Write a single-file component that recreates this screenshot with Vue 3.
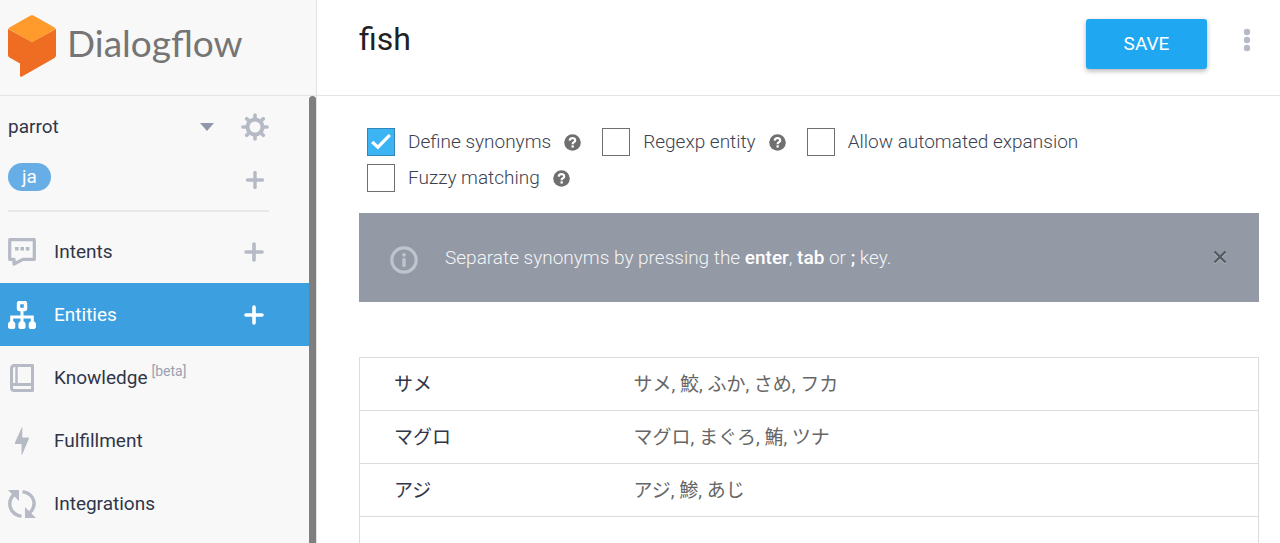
<script setup>
import { ref } from 'vue'

const name = ref('fish')
const showHint = ref(true)

const items = [
  { id: 'intents', label: 'Intents', add: true },
  { id: 'entities', label: 'Entities', add: true, active: true },
  { id: 'knowledge', label: 'Knowledge', note: '[beta]' },
  { id: 'fulfillment', label: 'Fulfillment' },
  { id: 'integrations', label: 'Integrations' },
]

const options = ref([
  { id: 'synonyms', label: 'Define synonyms', on: true, help: true },
  { id: 'regexp', label: 'Regexp entity', on: false, help: true },
  { id: 'expansion', label: 'Allow automated expansion', on: false, help: false },
  { id: 'fuzzy', label: 'Fuzzy matching', on: false, help: true },
])

const rows = [
  { value: 'サメ', synonyms: 'サメ, 鮫, ふか, さめ, フカ' },
  { value: 'マグロ', synonyms: 'マグロ, まぐろ, 鮪, ツナ' },
  { value: 'アジ', synonyms: 'アジ, 鯵, あじ' },
  { value: '', synonyms: '' },
]
</script>

<template>
  <div class="app">
    <aside class="sidebar">
      <a href="#" class="brand">
        <svg class="logo" viewBox="0 0 50 62" width="50" height="62" aria-hidden="true">
          <path fill="#ef6c23" d="M1 14 L25 27 L49 14 V40 Q49 42 47.500 43 L15 61.500 Q13 62.500 13 60.500 V48.500 L2.500 42.500 Q1 41.500 1 40 Z" />
          <path fill="#ff9a2d" d="M1.200 14 Q1.500 13 2.500 12.500 L23.500 .600 Q25 0 26.500 .600 L47.500 12.500 Q48.500 13 48.800 14 L25 27.500 Z" />
        </svg>
        <span class="wordmark">Dialogflow</span>
      </a>
      <div class="side-body">
        <div class="side-content">
          <div class="agent">
            <button type="button" class="agent-name">
              <span>parrot</span>
              <svg width="14" height="8" viewBox="0 0 14 8" aria-hidden="true"><path fill="#9097a8" d="M0 0H14L7 8Z" /></svg>
            </button>
            <button type="button" class="icon-btn" aria-label="Agent settings">
              <svg width="28" height="28" viewBox="0 0 28 28" fill="none" stroke="#b5bac5" aria-hidden="true">
                <circle cx="14" cy="14" r="7.500" stroke-width="4" />
                <path stroke-width="3.600" stroke-linecap="round" d="M14 5V2M14 23V26M5 14H2M23 14H26M7.500 7.500L5.700 5.700M20.500 20.500L22.300 22.300M7.500 20.500L5.700 22.300M20.500 7.500L22.300 5.700" />
              </svg>
            </button>
          </div>
          <div class="lang">
            <a href="#" class="pill">ja</a>
            <button type="button" class="icon-btn" aria-label="Add language">
              <svg width="28" height="18" viewBox="0 0 28 18" aria-hidden="true"><path d="M14 1.500V16.500M6.500 9H21.500" stroke="#b5bac5" stroke-width="3.400" stroke-linecap="round" /></svg>
            </button>
          </div>
          <nav class="nav">
            <div v-for="item in items" :key="item.id" class="nav-item" :class="{ active: item.active }">
              <a href="#" class="nav-link">
                <svg class="nav-icon" width="28" height="28" viewBox="0 0 28 28" aria-hidden="true">
                  <g v-if="item.id === 'intents'">
                    <path d="M1.700 1.700H26.300V21.300H15L6 26V21.300H1.700Z" fill="none" stroke="currentColor" stroke-width="3.200" stroke-linejoin="round" />
                    <path d="M7 9h3.600v3.600H7zM12.400 9H16v3.600h-3.600zM17.800 9h3.600v3.600h-3.600z" fill="currentColor" />
                  </g>
                  <g v-else-if="item.id === 'entities'">
                    <rect x="10.500" y="1.500" width="7" height="7" rx="1" fill="none" stroke="currentColor" stroke-width="3.400" />
                    <path d="M14 10V21M3.700 22V16H24.300V22" fill="none" stroke="currentColor" stroke-width="3" />
                    <path d="M1.500 20.500H6L7.300 22.500V26.500L6 28H1.500L0 26.500V22.500ZM11.800 20.500H16.200L17.600 22.500V26.500L16.200 28H11.800L10.400 26.500V22.500ZM22 20.500H26.500L28 22.500V26.500L26.500 28H22L20.700 26.500V22.500Z" fill="currentColor" />
                  </g>
                  <g v-else-if="item.id === 'knowledge'" fill="none" stroke="currentColor" stroke-width="3">
                    <path d="M24.500 19V1.500H6.500Q3.500 1.500 3.500 4.500V23.500Q3.500 26.500 6.500 26.500H24.500V20" stroke-linejoin="round" />
                    <path d="M4 20.500H26" />
                    <path d="M8.500 2V20" stroke-width="2.400" />
                  </g>
                  <path v-else-if="item.id === 'fulfillment'" fill="currentColor" d="M14 0L7 15.500V17H13.500V28H14L21 11.500V10.500H14.300V0Z" />
                  <g v-else>
                    <path d="M6 4.500C-1 11 .500 24 13.500 26.300M14.500 1.700C27.500 4 29 16 21.500 23" fill="none" stroke="currentColor" stroke-width="3.400" />
                    <path fill="currentColor" d="M0 0H11V11ZM28 28H17V17Z" />
                  </g>
                </svg>
                <span>{{ item.label }}<sup v-if="item.note">{{ item.note }}</sup></span>
              </a>
              <button v-if="item.add" type="button" class="icon-btn" :aria-label="'Add to ' + item.label">
                <svg width="28" height="20" viewBox="0 0 28 20" aria-hidden="true"><path d="M14 2V18M6 10H22" stroke="currentColor" stroke-width="3.600" stroke-linecap="round" /></svg>
              </button>
            </div>
          </nav>
        </div>
        <div class="scrollbar"></div>
      </div>
    </aside>

    <main class="main">
      <header class="topbar">
        <input v-model="name" class="title" type="text" aria-label="Entity name" />
        <button type="button" class="save">SAVE</button>
        <button type="button" class="more" aria-label="More options">
          <svg width="8" height="24" viewBox="0 0 8 24" fill="#b5bac5" aria-hidden="true"><circle cx="4" cy="4" r="3.200" /><circle cx="4" cy="12" r="3.200" /><circle cx="4" cy="20" r="3.200" /></svg>
        </button>
      </header>

      <div class="content">
        <div class="options">
          <div v-for="o in options" :key="o.id" class="option">
            <input :id="o.id" v-model="o.on" class="box" type="checkbox" />
            <label :for="o.id">{{ o.label }}</label>
            <svg v-if="o.help" class="help" width="17" height="17" viewBox="0 0 17 17" aria-hidden="true">
              <circle cx="8.500" cy="8.500" r="8.300" fill="#6f6f6f" />
              <path d="M5.700 6.600C5.900 3.400 11.200 3.400 11.200 6.400C11.200 8.200 8.600 8.300 8.600 10.200" fill="none" stroke="#fff" stroke-width="2.200" />
              <rect x="7.500" y="11.300" width="2.300" height="2.300" fill="#fff" />
            </svg>
          </div>
        </div>

        <div v-if="showHint" class="hint">
          <svg width="28" height="28" viewBox="0 0 28 28" aria-hidden="true">
            <circle cx="14" cy="14" r="12.200" fill="none" stroke="#bfc4cd" stroke-width="3.200" />
            <circle cx="14" cy="8.800" r="1.900" fill="#bfc4cd" />
            <path d="M14 13.500V19.500" stroke="#bfc4cd" stroke-width="3.400" stroke-linecap="round" />
          </svg>
          <p>Separate synonyms by pressing the <b>enter</b>, <b>tab</b> or <b>;</b> key.</p>
          <button type="button" class="close" aria-label="Close" @click="showHint = false">
            <svg width="14" height="15" viewBox="0 0 14 15" fill="none" stroke-width="2.300" aria-hidden="true">
              <path d="M1.500 2.500L12.500 13.500M12.500 2.500L1.500 13.500" stroke="#b9bdc6" />
              <path d="M1.500 1.500L12.500 12.500M12.500 1.500L1.500 12.500" stroke="#555a61" />
            </svg>
          </button>
        </div>

        <table class="entries">
          <tbody>
            <tr v-for="(r, i) in rows" :key="i">
              <td class="value">{{ r.value }}</td>
              <td class="synonyms">{{ r.synonyms }}</td>
            </tr>
          </tbody>
        </table>
      </div>
    </main>
  </div>
</template>

<style>
html,
body {
  margin: 0;
  background: #fff;
}
</style>

<style scoped>
* {
  box-sizing: border-box;
}
.app {
  display: flex;
  height: 100vh;
  overflow: hidden;
  font-family: Roboto, "Noto Sans CJK JP", sans-serif;
  font-size: 19px;
  line-height: 24px;
  color: #303648;
}
button {
  font: inherit;
  color: inherit;
  border: 0;
  padding: 0;
  background: none;
  cursor: pointer;
}
a {
  color: inherit;
  text-decoration: none;
}
svg {
  display: block;
  flex: none;
}
.sidebar {
  display: flex;
  flex-direction: column;
  flex: none;
  width: 317px;
  background: #f8f8f8;
  border-right: 1px solid #e2e2e2;
}
.brand {
  display: flex;
  align-items: center;
  gap: 10px;
  flex: none;
  height: 96px;
  padding: 0 7px 4px;
  border-bottom: 1px solid #e4e4e4;
}
.wordmark {
  padding-bottom: 6px;
  font-family: Lato, sans-serif;
  font-size: 37px;
  line-height: 44px;
  color: #757575;
}
.side-body {
  display: flex;
  flex: 1;
  min-height: 0;
}
.side-content {
  flex: 1;
  overflow: hidden;
}
.scrollbar {
  flex: none;
  width: 7px;
  background: #7f7f7f;
  border-radius: 4px 4px 0 0;
}
.agent,
.lang {
  display: flex;
  align-items: center;
  justify-content: space-between;
  margin: 0 40px 0 8px;
}
.agent {
  gap: 27px;
  height: 62px;
}
.agent-name {
  display: flex;
  flex: 1;
  align-items: center;
  justify-content: space-between;
}
.lang {
  height: 54px;
  padding-bottom: 14px;
  border-bottom: 2px solid #e8e8e8;
}
.lang .icon-btn {
  padding-top: 6px;
}
.pill {
  padding: 2px 14px;
  border-radius: 14px;
  background: #67ade6;
  color: #fff;
}
.nav {
  padding-top: 8px;
}
.nav-item {
  display: flex;
  align-items: center;
  height: 63px;
  padding: 0 41px 0 8px;
  color: #b5bac5;
}
.nav-item.active {
  background: #3c9fdf;
  color: #fff;
}
.nav-link {
  display: flex;
  flex: 1;
  align-items: center;
  gap: 18px;
}
.nav-link span {
  color: #303648;
}
.active .nav-link span {
  color: #fff;
}
sup {
  margin-left: 4px;
  font-size: 14px;
  line-height: 0;
  color: #9aa1b1;
}
.main {
  display: flex;
  flex: 1;
  flex-direction: column;
  min-width: 0;
}
.topbar {
  display: flex;
  align-items: flex-start;
  flex: none;
  height: 96px;
  padding: 19px 29px 0 42px;
  border-bottom: 1px solid #e4e4e4;
}
.title {
  flex: 1;
  min-width: 0;
  height: 40px;
  padding: 0;
  border: 0;
  outline: 0;
  background: none;
  font: inherit;
  font-size: 32px;
  color: #212121;
}
.save {
  width: 121px;
  height: 50px;
  border-radius: 3px;
  background: #1fa8f1;
  color: #fff;
  box-shadow: 0 2px 5px rgba(0, 0, 0, 0.3);
}
.more {
  margin: 9px 0 0 36px;
}
.content {
  padding: 28px 21px 0 42px;
}
.options {
  display: flex;
  flex-wrap: wrap;
  padding: 0 8px;
  gap: 0 21px;
}
.option {
  display: flex;
  align-items: center;
  height: 36px;
  font-weight: 300;
  color: #3c4250;
}
.box {
  appearance: none;
  display: grid;
  place-items: center;
  width: 28px;
  height: 28px;
  margin: 0 13px 0 0;
  border: 1px solid #6f6f6f;
  background: #fff;
}
.box:checked {
  border-color: #3187b8;
  background: #3cb4f4;
}
.box:checked::before {
  content: "";
  width: 20px;
  height: 16px;
  background: #fff;
  clip-path: polygon(0 56%, 12% 42%, 34% 68%, 88% 0, 100% 12%, 35% 97%);
}
.help {
  margin-left: 13px;
}
.hint {
  display: flex;
  align-items: center;
  gap: 27px;
  height: 89px;
  margin-top: 17px;
  padding: 0 32px 0 31px;
  background: #9399a5;
  color: #f4f5f7;
  font-weight: 300;
}
.hint > svg {
  margin-top: 5px;
}
.hint p {
  flex: 1;
  margin: 0;
}
.hint b {
  font-weight: 500;
  color: #fff;
}
.entries {
  width: 100%;
  margin-top: 55px;
  border-collapse: collapse;
  border: 1px solid #dcdcdc;
}
.entries tr {
  height: 53px;
  border-bottom: 1px solid #dcdcdc;
}
.entries td {
  padding: 2px 0 0 34px;
  vertical-align: middle;
}
.entries .value {
  width: 240px;
}
.entries .synonyms {
  color: #666;
}
</style>
